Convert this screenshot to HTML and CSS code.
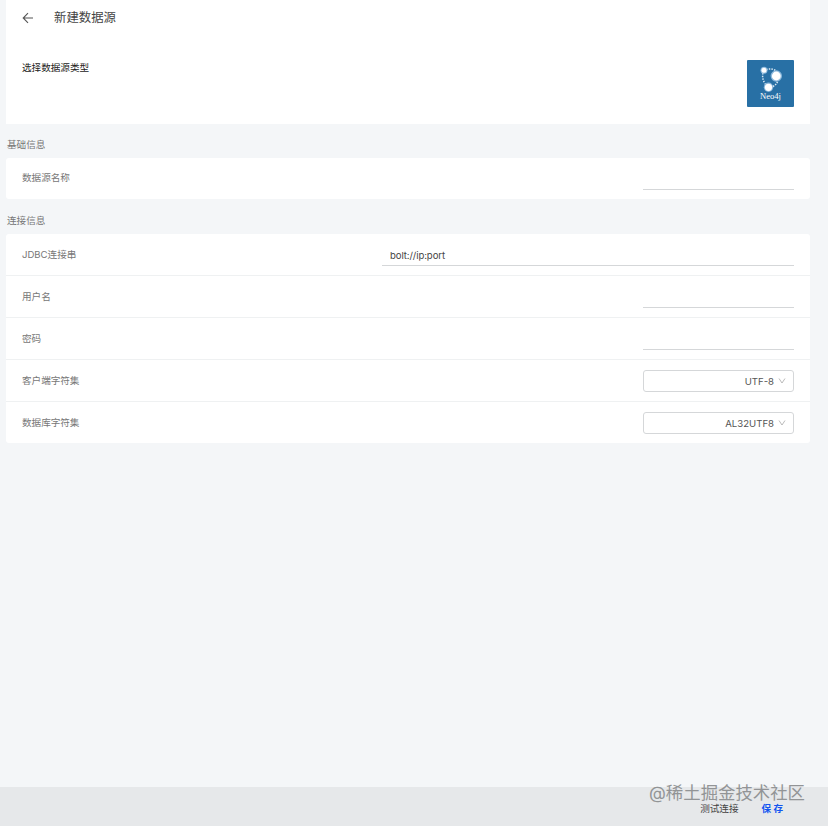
FILE: index.html
```html
<!DOCTYPE html>
<html lang="zh-CN">
<head>
    <meta charset="UTF-8">
    <meta name="viewport" content="width=device-width, initial-scale=1.0">
    <title>新建数据源</title>
    <link rel="stylesheet" href="styles.css">
</head>
<body>
    <main class="page">
        <section class="card type-card">
            <header class="header">
                <svg class="back" viewBox="0 0 12 12"><path d="M11 6H1.3M6 1.2L1.2 6L6 10.8"/></svg>
                <h1 class="title">新建数据源</h1>
            </header>
            <div class="type-row">
                <span class="type-label">选择数据源类型</span>
                <div class="logo">
                    <svg class="logo-mark" viewBox="0 0 47 47">
                        <g class="logo-links">
                            <path d="M19 9.500Q25 7.800 29 11"/>
                            <path d="M16 13Q14.500 19 19 25"/>
                            <path d="M31 19Q31 24 25 27"/>
                        </g>
                        <g class="logo-halo">
                            <circle cx="17" cy="10.300" r="3.500"/>
                            <circle cx="29.300" cy="16" r="5.700"/>
                            <circle cx="21.500" cy="27.300" r="4.700"/>
                        </g>
                        <g class="logo-nodes">
                            <circle cx="17" cy="10.300" r="2.500"/>
                            <circle cx="29.300" cy="16" r="4.400"/>
                            <circle cx="21.500" cy="27.300" r="3.600"/>
                        </g>
                        <text class="logo-text" x="23.500" y="38.800" textLength="21" lengthAdjust="spacingAndGlyphs">Neo4j</text>
                    </svg>
                </div>
            </div>
        </section>

        <h2 class="section-title">基础信息</h2>
        <section class="card">
            <div class="row row-single">
                <label for="name">数据源名称</label>
                <input type="text" id="name" class="line-input">
            </div>
        </section>

        <h2 class="section-title">连接信息</h2>
        <section class="card">
            <div class="row">
                <label for="jdbc">JDBC连接串</label>
                <input type="text" id="jdbc" class="line-input wide" value="bolt://ip:port">
            </div>
            <div class="row">
                <label for="user">用户名</label>
                <input type="text" id="user" class="line-input">
            </div>
            <div class="row">
                <label for="password">密码</label>
                <input type="password" id="password" class="line-input">
            </div>
            <div class="row">
                <label>客户端字符集</label>
                <div class="select">
                    <span>UTF-8</span>
                    <svg class="arrow" viewBox="0 0 8 6"><path d="M1 .5L4 5L7 .5"/></svg>
                </div>
            </div>
            <div class="row">
                <label>数据库字符集</label>
                <div class="select">
                    <span>AL32UTF8</span>
                    <svg class="arrow" viewBox="0 0 8 6"><path d="M1 .5L4 5L7 .5"/></svg>
                </div>
            </div>
        </section>
    </main>

    <footer class="footer">
        <button type="button" class="btn">测试连接</button>
        <button type="button" class="btn btn-save">保 存</button>
        <span class="watermark">@稀土掘金技术社区</span>
    </footer>
</body>
</html>
```

FILE: styles.css
```css
* {
    box-sizing: border-box;
}
body {
    margin: 0;
    height: 826px;
    display: flex;
    flex-direction: column;
    overflow: hidden;
    background: #f4f6f8;
    color: #777;
    font-family: Inter, "Noto Sans CJK SC", sans-serif;
    font-size: 9.6px;
}
.page {
    flex: 1;
    padding: 0 18px 0 6px;
}
.card {
    background: #fff;
    border-radius: 3px;
}
.type-card {
    height: 124px;
    padding: 0 16px;
    border-radius: 0;
}
.header {
    display: flex;
    align-items: center;
    height: 35px;
    gap: 20px;
}
.back {
    width: 12px;
    height: 12px;
    fill: none;
    stroke: #555;
    stroke-width: 1.1;
}
.title {
    margin: 0;
    padding-bottom: 2px;
    color: #444;
    font-size: 12.4px;
    font-weight: 400;
}
.type-row {
    display: flex;
    justify-content: space-between;
    padding-top: 25px;
}
.type-label {
    line-height: 16px;
    color: #222;
}
.logo {
    width: 47px;
    height: 47px;
    border-radius: 1px;
    background: #2870a5;
}
.logo-mark {
    display: block;
}
.logo-links {
    fill: none;
    stroke: #d9e8f3;
    stroke-width: 1.5;
    stroke-dasharray: 1.5 1.2;
}
.logo-halo {
    fill: #8db9dc;
}
.logo-nodes {
    fill: #fff;
}
.logo-text {
    fill: #fff;
    font-family: "Liberation Serif", serif;
    font-size: 8.6px;
    text-anchor: middle;
}
.section-title {
    margin: 0;
    padding: 4px 0 0 1px;
    height: 34px;
    line-height: 33px;
    font-size: 9.6px;
    font-weight: 400;
}
.section-title + .card {
    margin-bottom: 1px;
}
.row {
    display: flex;
    align-items: center;
    justify-content: space-between;
    height: 42px;
    padding: 0 16px;
}
.row:first-child {
    height: 41px;
}
.row + .row {
    border-top: 1px solid #eff1f2;
}
.row label {
    padding-bottom: 2px;
    letter-spacing: -.02px;
}
.row-single label {
    padding-bottom: 4px;
}
.line-input {
    width: 151px;
    height: 22px;
    margin-top: 1px;
    padding: 1px 8px 0;
    border: 0;
    border-bottom: 1px solid #d5d7d9;
    background: none;
    color: #444;
    font: inherit;
    letter-spacing: -.1px;
    outline: none;
}
.wide {
    width: 412px;
}
.select {
    display: flex;
    align-items: center;
    justify-content: flex-end;
    gap: 5px;
    width: 151px;
    height: 22px;
    padding: 1px 7px 0;
    border: 1px solid #d5d7d9;
    border-radius: 3px;
    color: #555;
}
.select span {
    margin-right: -1px;
    padding-top: 1px;
}
.arrow {
    width: 8px;
    height: 6px;
    margin-bottom: 1px;
    fill: none;
    stroke: #aaa;
    stroke-width: .8;
}
.footer {
    position: relative;
    display: flex;
    align-items: center;
    justify-content: flex-end;
    gap: 23px;
    height: 39px;
    padding: 2px 45px 0 0;
    background: #e6e8ea;
}
.btn {
    padding: 0;
    border: 0;
    background: none;
    color: #444;
    font: inherit;
}
.btn-save {
    color: #1456f0;
    font-weight: 700;
}
.watermark {
    position: absolute;
    right: 23px;
    top: -7px;
    color: #929496;
    font-size: 17.4px;
    line-height: 26px;
    white-space: nowrap;
}
```
